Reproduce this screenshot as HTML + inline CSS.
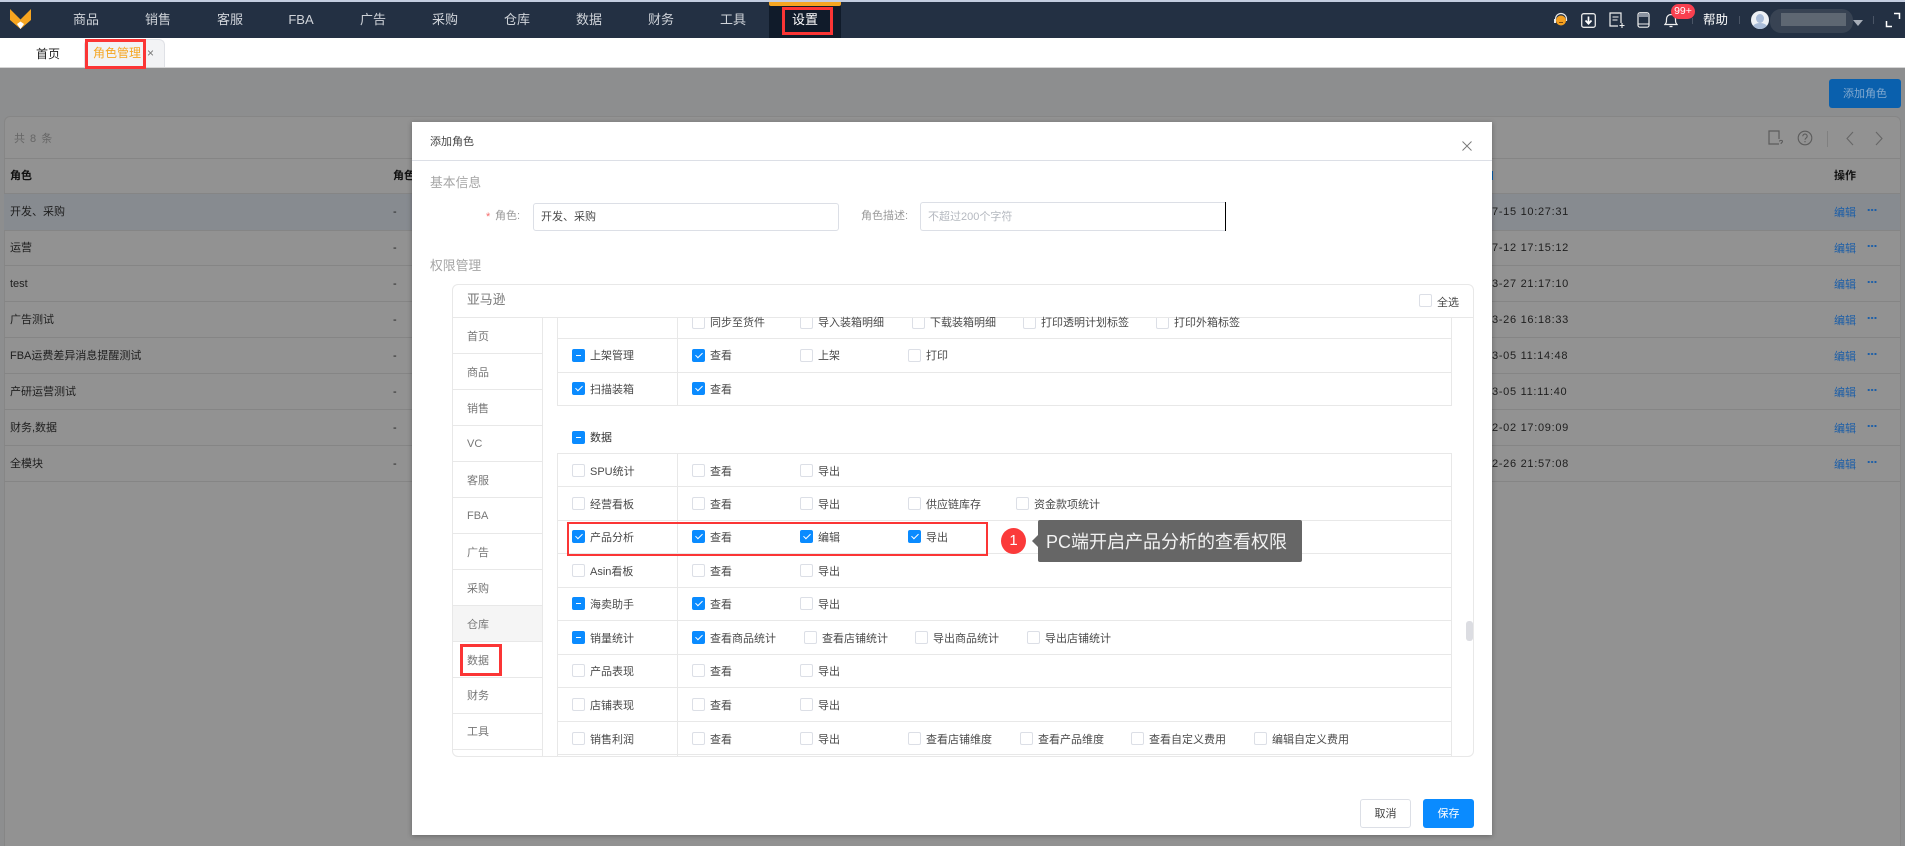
<!DOCTYPE html>
<html lang="zh"><head><meta charset="utf-8"><title>角色管理</title>
<style>
*{box-sizing:border-box}
html,body{margin:0;padding:0;width:1905px;height:846px;overflow:hidden;background:#8d8e8f}
body{position:relative;font-family:"Liberation Sans","Noto Sans CJK SC",sans-serif;font-size:11px}
div,span,i,b,svg{position:absolute;display:block}
.t{line-height:16px;white-space:nowrap;color:#4a4a4a;font-style:normal;font-weight:400}
.n{top:11px;line-height:18px;font-size:13px;color:#cfd3d9;width:72px;text-align:center;white-space:nowrap}
.r{left:4px;width:1896px;height:1px;background:#858585}
.d{color:#1e1e1e;line-height:16px;white-space:nowrap}
.l{color:#1b5ea8;line-height:16px;left:1834px}
.m{left:1867px;width:10px;height:2px;background-image:radial-gradient(circle,#1b5ea8 1.1px,transparent 1.2px);background-size:3.4px 2px}
.c{width:13px;height:13px;border:1px solid #dcdfe6;border-radius:2px;background:#fff}
.k{width:13px;height:13px;border-radius:2px;background:#0a8bff}
.k:after{content:"";position:absolute;left:4.5px;top:2px;width:3px;height:6px;border:solid #fff;border-width:0 1px 1px 0;transform:rotate(45deg)}
.h{width:13px;height:13px;border-radius:2px;background:#0a8bff}
.h:after{content:"";position:absolute;left:4px;top:6px;width:5px;height:1px;background:#fff}
.ln{height:1px;background:#e8e8e8;left:557px;width:895px}
.ll{height:1px;background:#e8e8e8;left:453px;width:90px}
.s{left:467px;line-height:16px;color:#777;white-space:nowrap}
.red{border:3px solid #fb3535;background:transparent}
</style></head><body>

<!-- top nav -->
<div style="left:0;top:0;width:1905px;height:2px;background:#c3cde0"></div>
<div style="left:0;top:2px;width:1905px;height:36px;background:#233043"></div>
<svg style="left:9px;top:8px" width="23" height="22" viewBox="0 0 23 22"><path d="M1 1L7 7H16L22 1V12L11.500 21L1 12Z" fill="#f7a520"/><path d="M7 7L11.500 11.500L16 7Z" fill="#233043"/><path d="M8 16L11.500 13.500L15 16L11.500 21Z" fill="#fff"/></svg>
<span class="n" style="left:50px">商品</span><span class="n" style="left:122px">销售</span><span class="n" style="left:194px">客服</span><span class="n" style="left:265px">FBA</span><span class="n" style="left:337px">广告</span><span class="n" style="left:409px">采购</span><span class="n" style="left:481px">仓库</span><span class="n" style="left:553px">数据</span><span class="n" style="left:625px">财务</span><span class="n" style="left:697px">工具</span>
<div style="left:769px;top:2px;width:72px;height:36px;background:#101b2a"></div>
<div style="left:769px;top:2px;width:72px;height:4px;background:#f5a623;border-radius:0 0 2px 2px"></div>
<span class="n" style="left:769px;color:#fff">设置</span>
<div class="red" style="left:782px;top:7px;width:51px;height:28px"></div>

<!-- nav right icons -->
<svg style="left:1553px;top:11px" width="16" height="18" viewBox="0 0 16 18"><path d="M2.500 10V8a5.500 5.500 0 0 1 11 0v2" fill="none" stroke="#e8e8e8" stroke-width="1.200"/><circle cx="8" cy="9.500" r="5" fill="#f5a020"/><rect x="1" y="8" width="2" height="4" fill="#e8e8e8"/><path d="M6 11.500h4" stroke="#7a4a10" stroke-width="1"/></svg>
<svg style="left:1581px;top:13px" width="15" height="15" viewBox="0 0 15 15"><rect x=".7" y=".7" width="13.600" height="13.600" rx="2" fill="#233043" stroke="#e8e8e8" stroke-width="1.300"/><path d="M7.500 3.500v6.500M4.500 7.500l3 3.200 3-3.200" fill="none" stroke="#fff" stroke-width="1.700"/></svg>
<svg style="left:1609px;top:12px" width="17" height="17" viewBox="0 0 17 17"><path d="M12 11V1H1v13h8" fill="none" stroke="#f0f0f0" stroke-width="1.200"/><path d="M3.500 5h6M3.500 8h5" stroke="#f0f0f0" stroke-width="1.100"/><path d="M13 11v5M10.500 13.500h5" stroke="#f0f0f0" stroke-width="1.100"/></svg>
<svg style="left:1637px;top:12px" width="13" height="16" viewBox="0 0 13 16"><rect x="1" y=".7" width="11" height="14.500" rx="2" fill="none" stroke="#f0f0f0" stroke-width="1.200"/><rect x="2" y="1" width="9" height="4" fill="#8b93a0"/><path d="M1 12h11" stroke="#f0f0f0" stroke-width="1"/></svg>
<svg style="left:1664px;top:12px" width="14" height="16" viewBox="0 0 14 16"><path d="M1 12.500h12c-1.500-1.500-1.500-3-1.500-5.500a4.500 4.500 0 0 0-9 0c0 2.500 0 4-1.500 5.500Z" fill="none" stroke="#f0f0f0" stroke-width="1.200"/><path d="M5.500 14.500h3" stroke="#f0f0f0" stroke-width="1.300"/></svg>
<div style="left:1671px;top:4px;width:24px;height:15px;background:#f9404f;border-radius:8px;color:#fff;font-size:10.500px;line-height:15px;text-align:center">99+</div>
<div style="left:1692px;top:18px;width:1px;height:6px;background:#4a5566"></div>
<span class="t" style="left:1703px;top:12px;color:#fff;font-size:12.500px">帮助</span>
<div style="left:1739px;top:16px;width:1px;height:8px;background:#4a5566"></div>
<div style="left:1751px;top:11px;width:18px;height:18px;border-radius:50%;background:#eef1f5;overflow:hidden"><div style="left:5px;top:3px;width:8px;height:9px;border-radius:50%;background:#a9bcd8"></div><div style="left:2px;top:12px;width:14px;height:8px;border-radius:50%;background:#a9bcd8"></div></div>
<div style="left:1770px;top:9px;width:83px;height:24px;background:#384353;border-radius:11px"></div>
<div style="left:1781px;top:13px;width:65px;height:13px;background:#5e6772"></div>
<div style="left:1853px;top:20px;width:0;height:0;border-left:5px solid transparent;border-right:5px solid transparent;border-top:6px solid #a6adb8"></div>
<div style="left:1873px;top:16px;width:1px;height:8px;background:#4a5566"></div>
<svg style="left:1885px;top:12px" width="16" height="16" viewBox="0 0 16 16"><path d="M9 1.500h5.500V7M1.500 9v5.500H7" fill="none" stroke="#fff" stroke-width="1.500"/></svg>

<!-- tab bar -->
<div style="left:0;top:38px;width:1905px;height:29px;background:#fff"></div>
<div style="left:0;top:67px;width:1905px;height:1px;background:#d5d5d5"></div>
<span class="t" style="left:36px;top:46px;color:#222;font-size:12px">首页</span>
<div style="left:84px;top:39px;width:81px;height:28px;background:#f2f3f5;border:1px solid #dfe1e6;border-bottom:0;border-radius:6px 6px 0 0"></div>
<span class="t" style="left:93px;top:45px;color:#f5a623;font-size:12px">角色管理</span>
<span class="t" style="left:147px;top:45px;color:#777;font-size:12px">×</span>
<div class="red" style="left:85px;top:39px;width:61px;height:30px"></div>

<!-- background page -->
<div style="left:1829px;top:79px;width:72px;height:29px;background:#0a60ad;border-radius:3px;color:#82a9cf;line-height:30px;text-align:center;font-size:11px">添加角色</div>
<div style="left:4px;top:116px;width:1897px;height:760px;background:#929292;border:1px solid #868686;border-radius:6px"></div>
<span class="d" style="left:14px;top:131px;color:#666;letter-spacing:1px">共 8 条</span>
<svg style="left:1767px;top:130px" width="18" height="17" viewBox="0 0 18 17"><path d="M12 14H2V1h10v8" fill="none" stroke="#5c5c5c" stroke-width="1.200"/><path d="M12.500 11.500c0-1.500 3-1.500 3 0 0 1-1.500 1-1.500 2.500" fill="none" stroke="#5c5c5c" stroke-width="1.100"/></svg>
<svg style="left:1797px;top:130px" width="16" height="16" viewBox="0 0 16 16"><circle cx="8" cy="8" r="6.800" fill="none" stroke="#5c5c5c" stroke-width="1.100"/><path d="M5.800 6.300c0-3 4.400-3 4.400 0 0 1.800-2.200 1.700-2.200 3.500M8 11v1.200" fill="none" stroke="#5c5c5c" stroke-width="1.100"/></svg>
<div style="left:1827px;top:131px;width:1px;height:16px;background:#808080"></div>
<svg style="left:1846px;top:131px" width="8" height="15" viewBox="0 0 8 15"><path d="M7 1L1 7.500 7 14" fill="none" stroke="#666" stroke-width="1.100"/></svg>
<svg style="left:1875px;top:131px" width="8" height="15" viewBox="0 0 8 15"><path d="M1 1l6 6.500L1 14" fill="none" stroke="#666" stroke-width="1.100"/></svg>
<div class="r" style="top:158px"></div>
<b class="d" style="left:10px;top:168px;color:#111">角色</b><b class="d" style="left:393px;top:168px;color:#111">角色</b><b class="d" style="left:1834px;top:168px;color:#111">操作</b>
<div style="left:4px;top:194px;width:1896px;height:36px;background:#878b90"></div>
<div class="r" style="top:193px"></div><div class="r" style="top:230px"></div><div class="r" style="top:265px"></div><div class="r" style="top:301px"></div><div class="r" style="top:337px"></div><div class="r" style="top:373px"></div><div class="r" style="top:409px"></div><div class="r" style="top:445px"></div><div class="r" style="top:481px"></div>
<span class="d" style="left:10px;top:204px">开发、采购</span><span class="d" style="left:10px;top:240px">运营</span><span class="d" style="left:10px;top:276px">test</span><span class="d" style="left:10px;top:312px">广告测试</span><span class="d" style="left:10px;top:348px">FBA运费差异消息提醒测试</span><span class="d" style="left:10px;top:384px">产研运营测试</span><span class="d" style="left:10px;top:420px">财务,数据</span><span class="d" style="left:10px;top:456px">全模块</span>
<span class="d" style="left:393px;top:204px">-</span><span class="d" style="left:393px;top:240px">-</span><span class="d" style="left:393px;top:276px">-</span><span class="d" style="left:393px;top:312px">-</span><span class="d" style="left:393px;top:348px">-</span><span class="d" style="left:393px;top:384px">-</span><span class="d" style="left:393px;top:420px">-</span><span class="d" style="left:393px;top:456px">-</span>
<span class="d" style="left:1492px;top:204px;letter-spacing:.7px">7-15 10:27:31</span><span class="d" style="left:1492px;top:240px;letter-spacing:.7px">7-12 17:15:12</span><span class="d" style="left:1492px;top:276px;letter-spacing:.7px">3-27 21:17:10</span><span class="d" style="left:1492px;top:312px;letter-spacing:.7px">3-26 16:18:33</span><span class="d" style="left:1492px;top:348px;letter-spacing:.7px">3-05 11:14:48</span><span class="d" style="left:1492px;top:384px;letter-spacing:.7px">3-05 11:11:40</span><span class="d" style="left:1492px;top:420px;letter-spacing:.7px">2-02 17:09:09</span><span class="d" style="left:1492px;top:456px;letter-spacing:.7px">2-26 21:57:08</span>
<div style="left:1492px;top:171px;width:1px;height:9px;background:#0a60ad"></div>
<span class="l" style="top:205px">编辑</span><span class="l" style="top:241px">编辑</span><span class="l" style="top:277px">编辑</span><span class="l" style="top:313px">编辑</span><span class="l" style="top:349px">编辑</span><span class="l" style="top:385px">编辑</span><span class="l" style="top:421px">编辑</span><span class="l" style="top:457px">编辑</span>
<i class="m" style="top:209px"></i><i class="m" style="top:245px"></i><i class="m" style="top:281px"></i><i class="m" style="top:317px"></i><i class="m" style="top:353px"></i><i class="m" style="top:389px"></i><i class="m" style="top:425px"></i><i class="m" style="top:461px"></i>

<!-- modal -->
<div style="left:412px;top:122px;width:1080px;height:713px;background:#fff;box-shadow:0 1px 5px rgba(0,0,0,.3)"></div>
<div style="left:412px;top:160px;width:1080px;height:1px;background:#dcdfe6"></div>
<span class="t" style="left:430px;top:134px;color:#444">添加角色</span>
<svg style="left:1462px;top:141px" width="10" height="10" viewBox="0 0 10 10"><path d="M.5.5l9 9M9.500.5l-9 9" stroke="#777" stroke-width=".9"/></svg>
<span class="t" style="left:430px;top:175px;color:#a5a5a5;font-size:12.800px">基本信息</span>
<span class="t" style="left:486px;top:209px;color:#f56c6c">*</span>
<span class="t" style="left:495px;top:208px;color:#999">角色:</span>
<div style="left:533px;top:203px;width:306px;height:28px;border:1px solid #dcdfe6;border-radius:3px"></div>
<span class="t" style="left:541px;top:209px">开发、采购</span>
<span class="t" style="left:861px;top:208px;color:#999">角色描述:</span>
<div style="left:920px;top:202px;width:306px;height:29px;border:1px solid #dcdfe6;border-right:0;border-radius:3px 0 0 3px"></div>
<div style="left:1225px;top:202px;width:1px;height:29px;background:#000"></div>
<span class="t" style="left:928px;top:209px;color:#b5b9c0">不超过200个字符</span>
<span class="t" style="left:430px;top:258px;color:#a5a5a5;font-size:12.800px">权限管理</span>

<!-- panel -->
<div style="left:452px;top:284px;width:1022px;height:473px;border:1px solid #e8e8e8;border-radius:6px"></div>
<div style="left:453px;top:317px;width:1020px;height:1px;background:#e8e8e8"></div>
<span class="t" style="left:467px;top:292px;color:#777;font-size:12.800px">亚马逊</span>
<i class="c" style="left:1419px;top:294px"></i><span class="t" style="left:1437px;top:295px">全选</span>

<div style="left:542px;top:318px;width:1px;height:438px;background:#e8e8e8"></div>
<div style="left:453px;top:605px;width:89px;height:36px;background:#f5f5f5"></div>
<div class="ll" style="top:353px"></div><div class="ll" style="top:389px"></div><div class="ll" style="top:425px"></div><div class="ll" style="top:461px"></div><div class="ll" style="top:497px"></div><div class="ll" style="top:533px"></div><div class="ll" style="top:569px"></div><div class="ll" style="top:605px"></div><div class="ll" style="top:641px"></div><div class="ll" style="top:677px"></div><div class="ll" style="top:713px"></div><div class="ll" style="top:749px"></div>
<span class="s" style="top:329px">首页</span><span class="s" style="top:365px">商品</span><span class="s" style="top:401px">销售</span><span class="s" style="top:436px">VC</span><span class="s" style="top:473px">客服</span><span class="s" style="top:508px">FBA</span><span class="s" style="top:545px">广告</span><span class="s" style="top:581px">采购</span><span class="s" style="top:617px">仓库</span><span class="s" style="top:653px">数据</span><span class="s" style="top:688px">财务</span><span class="s" style="top:724px">工具</span>
<div class="red" style="left:460px;top:644px;width:42px;height:32px"></div>

<!-- table 1 -->
<div style="left:557px;top:318px;width:1px;height:88px;background:#e8e8e8"></div>
<div style="left:677px;top:318px;width:1px;height:88px;background:#e8e8e8"></div>
<div style="left:1451px;top:318px;width:1px;height:88px;background:#e8e8e8"></div>
<div class="ln" style="top:338px"></div><div class="ln" style="top:372px"></div><div class="ln" style="top:405px"></div>
<i class="c" style="left:692px;top:318px;height:11px;border-top:0;border-radius:0 0 2px 2px"></i><span class="t" style="left:710px;top:315px">同步至货件</span>
<i class="c" style="left:800px;top:318px;height:11px;border-top:0;border-radius:0 0 2px 2px"></i><span class="t" style="left:818px;top:315px">导入装箱明细</span>
<i class="c" style="left:912px;top:318px;height:11px;border-top:0;border-radius:0 0 2px 2px"></i><span class="t" style="left:930px;top:315px">下载装箱明细</span>
<i class="c" style="left:1023px;top:318px;height:11px;border-top:0;border-radius:0 0 2px 2px"></i><span class="t" style="left:1041px;top:315px">打印透明计划标签</span>
<i class="c" style="left:1156px;top:318px;height:11px;border-top:0;border-radius:0 0 2px 2px"></i><span class="t" style="left:1174px;top:315px">打印外箱标签</span>

<i class="h" style="left:572px;top:349px"></i><span class="t" style="left:590px;top:348px">上架管理</span>
<i class="k" style="left:692px;top:349px"></i><span class="t" style="left:710px;top:348px">查看</span>
<i class="c" style="left:800px;top:349px"></i><span class="t" style="left:818px;top:348px">上架</span>
<i class="c" style="left:908px;top:349px"></i><span class="t" style="left:926px;top:348px">打印</span>

<i class="k" style="left:572px;top:382px"></i><span class="t" style="left:590px;top:382px">扫描装箱</span>
<i class="k" style="left:692px;top:382px"></i><span class="t" style="left:710px;top:382px">查看</span>

<i class="h" style="left:572px;top:431px"></i><span class="t" style="left:590px;top:430px;color:#333">数据</span>

<!-- table 2 -->
<div style="left:557px;top:453px;width:1px;height:304px;background:#e8e8e8"></div>
<div style="left:677px;top:453px;width:1px;height:304px;background:#e8e8e8"></div>
<div style="left:1451px;top:453px;width:1px;height:304px;background:#e8e8e8"></div>
<div class="ln" style="top:453px"></div><div class="ln" style="top:486px"></div><div class="ln" style="top:520px"></div><div class="ln" style="top:553px"></div><div class="ln" style="top:587px"></div><div class="ln" style="top:620px"></div><div class="ln" style="top:654px"></div><div class="ln" style="top:687px"></div><div class="ln" style="top:721px"></div><div class="ln" style="top:754px"></div>

<i class="c" style="left:572px;top:464px"></i><span class="t" style="left:590px;top:464px">SPU统计</span>
<i class="c" style="left:692px;top:464px"></i><span class="t" style="left:710px;top:464px">查看</span>
<i class="c" style="left:800px;top:464px"></i><span class="t" style="left:818px;top:464px">导出</span>

<i class="c" style="left:572px;top:497px"></i><span class="t" style="left:590px;top:497px">经营看板</span>
<i class="c" style="left:692px;top:497px"></i><span class="t" style="left:710px;top:497px">查看</span>
<i class="c" style="left:800px;top:497px"></i><span class="t" style="left:818px;top:497px">导出</span>
<i class="c" style="left:908px;top:497px"></i><span class="t" style="left:926px;top:497px">供应链库存</span>
<i class="c" style="left:1016px;top:497px"></i><span class="t" style="left:1034px;top:497px">资金款项统计</span>

<i class="k" style="left:572px;top:530px"></i><span class="t" style="left:590px;top:530px">产品分析</span>
<i class="k" style="left:692px;top:530px"></i><span class="t" style="left:710px;top:530px">查看</span>
<i class="k" style="left:800px;top:530px"></i><span class="t" style="left:818px;top:530px">编辑</span>
<i class="k" style="left:908px;top:530px"></i><span class="t" style="left:926px;top:530px">导出</span>

<i class="c" style="left:572px;top:564px"></i><span class="t" style="left:590px;top:564px">Asin看板</span>
<i class="c" style="left:692px;top:564px"></i><span class="t" style="left:710px;top:564px">查看</span>
<i class="c" style="left:800px;top:564px"></i><span class="t" style="left:818px;top:564px">导出</span>

<i class="h" style="left:572px;top:597px"></i><span class="t" style="left:590px;top:597px">海卖助手</span>
<i class="k" style="left:692px;top:597px"></i><span class="t" style="left:710px;top:597px">查看</span>
<i class="c" style="left:800px;top:597px"></i><span class="t" style="left:818px;top:597px">导出</span>

<i class="h" style="left:572px;top:631px"></i><span class="t" style="left:590px;top:631px">销量统计</span>
<i class="k" style="left:692px;top:631px"></i><span class="t" style="left:710px;top:631px">查看商品统计</span>
<i class="c" style="left:804px;top:631px"></i><span class="t" style="left:822px;top:631px">查看店铺统计</span>
<i class="c" style="left:915px;top:631px"></i><span class="t" style="left:933px;top:631px">导出商品统计</span>
<i class="c" style="left:1027px;top:631px"></i><span class="t" style="left:1045px;top:631px">导出店铺统计</span>

<i class="c" style="left:572px;top:664px"></i><span class="t" style="left:590px;top:664px">产品表现</span>
<i class="c" style="left:692px;top:664px"></i><span class="t" style="left:710px;top:664px">查看</span>
<i class="c" style="left:800px;top:664px"></i><span class="t" style="left:818px;top:664px">导出</span>

<i class="c" style="left:572px;top:698px"></i><span class="t" style="left:590px;top:698px">店铺表现</span>
<i class="c" style="left:692px;top:698px"></i><span class="t" style="left:710px;top:698px">查看</span>
<i class="c" style="left:800px;top:698px"></i><span class="t" style="left:818px;top:698px">导出</span>

<i class="c" style="left:572px;top:732px"></i><span class="t" style="left:590px;top:732px">销售利润</span>
<i class="c" style="left:692px;top:732px"></i><span class="t" style="left:710px;top:732px">查看</span>
<i class="c" style="left:800px;top:732px"></i><span class="t" style="left:818px;top:732px">导出</span>
<i class="c" style="left:908px;top:732px"></i><span class="t" style="left:926px;top:732px">查看店铺维度</span>
<i class="c" style="left:1020px;top:732px"></i><span class="t" style="left:1038px;top:732px">查看产品维度</span>
<i class="c" style="left:1131px;top:732px"></i><span class="t" style="left:1149px;top:732px">查看自定义费用</span>
<i class="c" style="left:1254px;top:732px"></i><span class="t" style="left:1272px;top:732px">编辑自定义费用</span>

<div style="left:1466px;top:621px;width:7px;height:20px;background:#dcdde2;border-radius:3px"></div>

<!-- footer buttons -->
<div style="left:1360px;top:799px;width:51px;height:29px;border:1px solid #dcdfe6;border-radius:3px;background:#fff;color:#444;line-height:28px;text-align:center">取消</div>
<div style="left:1423px;top:799px;width:51px;height:29px;border-radius:3px;background:#0a8bff;color:#fff;line-height:30px;text-align:center">保存</div>

<!-- annotations -->
<div class="red" style="left:567px;top:522px;width:421px;height:34px;border-width:2px"></div>
<div style="left:1001px;top:528px;width:25px;height:26px;border-radius:50%;background:#fb3a3a;color:#fff;font-size:15px;line-height:26px;text-align:center">1</div>
<div style="left:1032px;top:535px;width:0;height:0;border-top:6px solid transparent;border-bottom:6px solid transparent;border-right:6px solid #666"></div>
<div style="left:1038px;top:520px;width:264px;height:42px;background:#666;border-radius:2px;color:#f2f2f2;font-size:18px;line-height:44px;padding-left:8px;white-space:nowrap">PC端开启产品分析的查看权限</div>
</body></html>
